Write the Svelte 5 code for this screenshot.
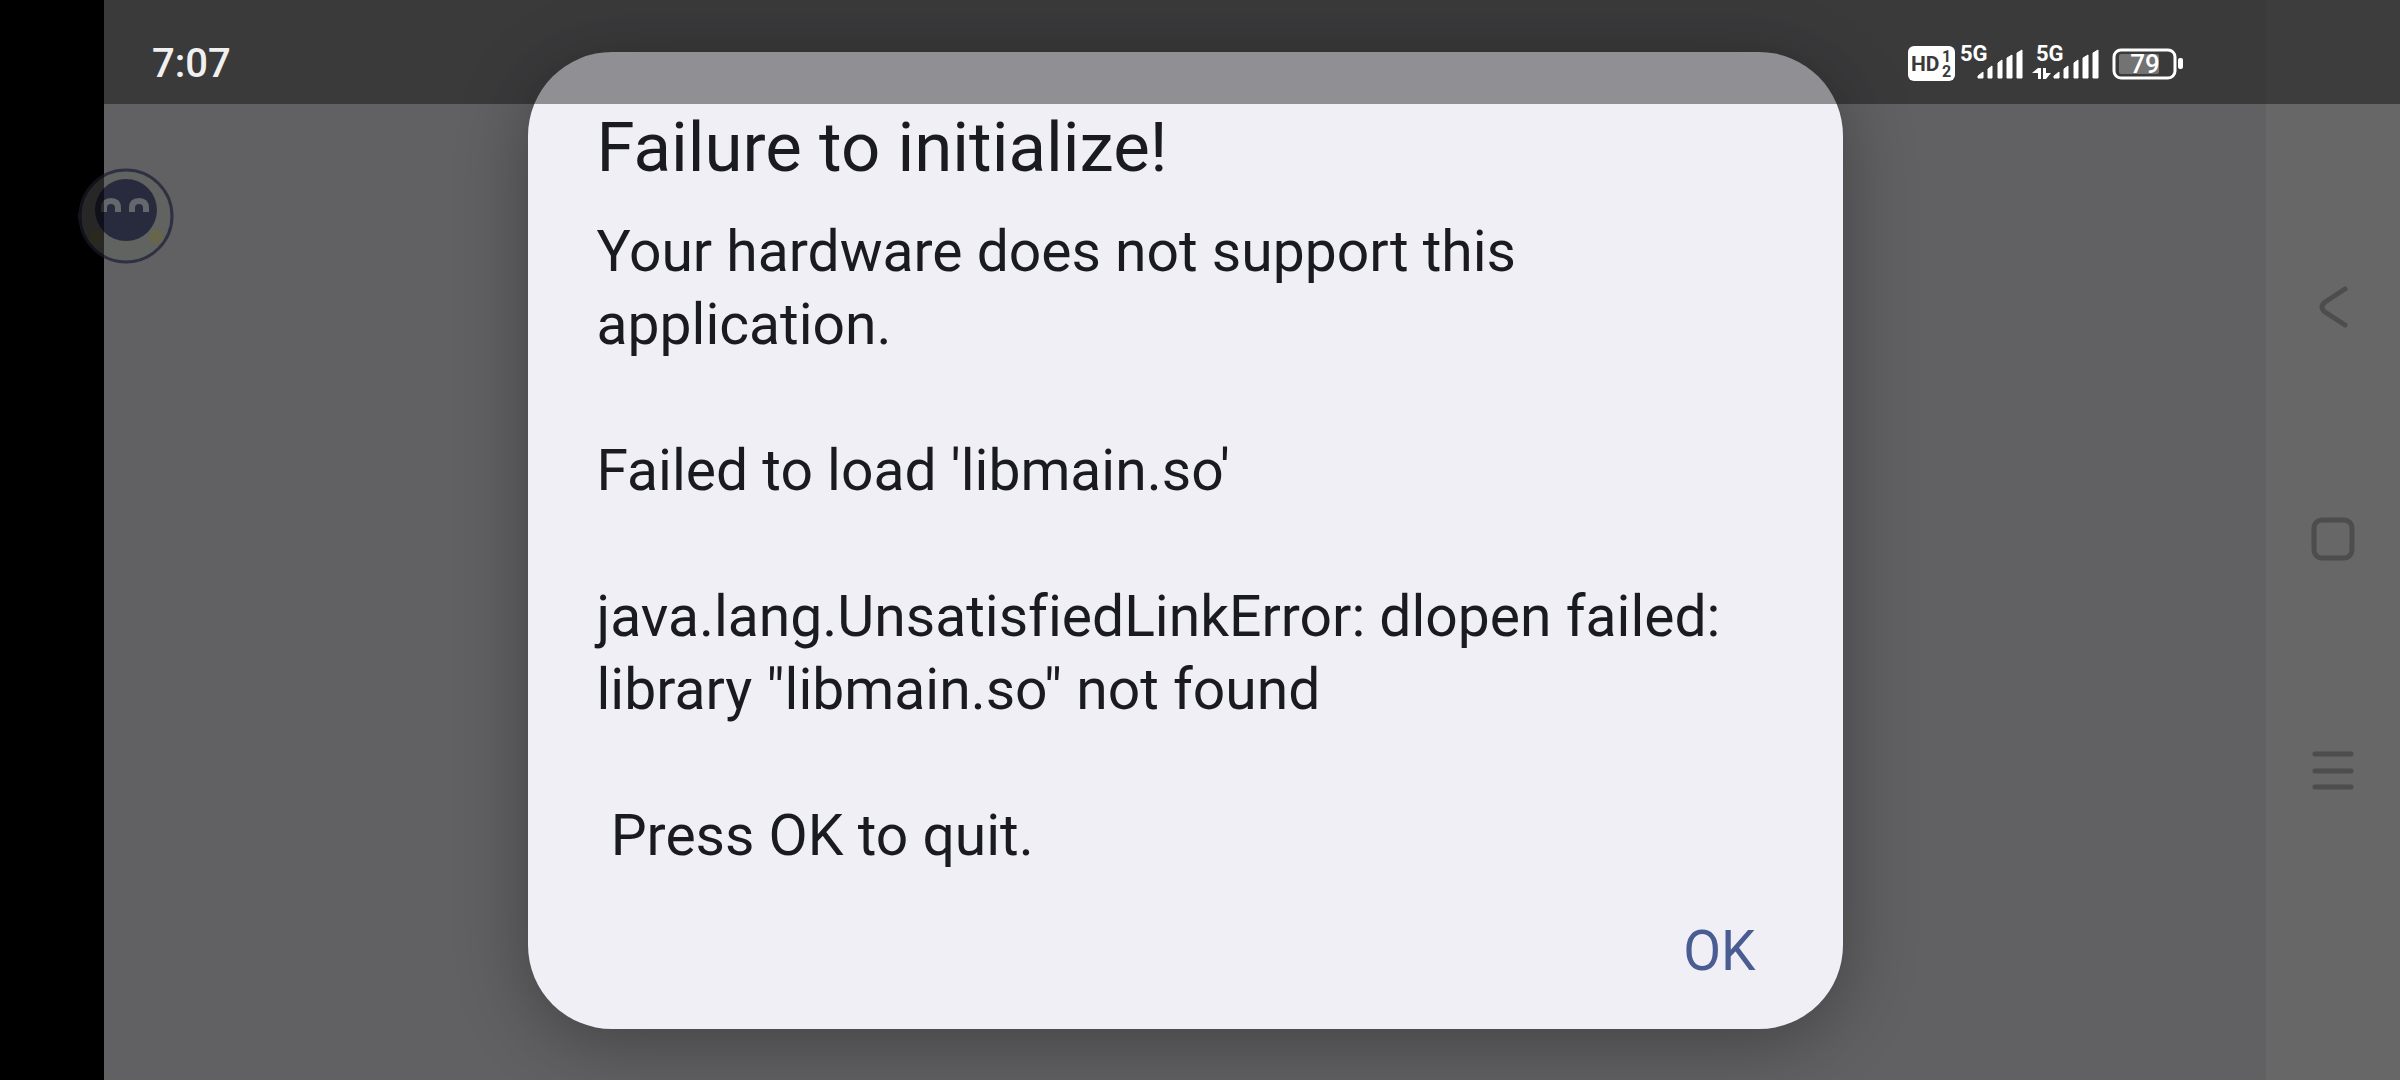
<script>
	let open = true;

	const title = 'Failure to initialize!';
	const message = `Your hardware does not support this application.

Failed to load 'libmain.so'

java.lang.UnsatisfiedLinkError: dlopen failed: library "libmain.so" not found

 Press OK to quit.`;

	const battery = 79;

	function close() {
		open = false;
	}
</script>

<style>
	:global(body) {
		margin: 0;
		background: #616163;
	}

	.screen {
		position: relative;
		display: grid;
		grid-template-columns: 104px 1fr 134px;
		min-height: 100vh;
		overflow: hidden;
		font-family: Roboto, "Noto Sans", sans-serif;
		background: #616163;
	}

	.cutout {
		background: #000;
	}

	.stage {
		display: flex;
		justify-content: center;
		align-items: center;
	}

	.dialog {
		display: flex;
		flex-direction: column;
		box-sizing: border-box;
		width: 100%;
		max-width: 1315px;
		padding: 50px 69px 26px;
		border-radius: 84px;
		background: #f0eff6;
		color: #1a1b21;
		box-shadow: 0 12px 72px rgba(0, 0, 0, 0.32);
	}

	.dialog h1 {
		margin: 0;
		font-size: 69px;
		line-height: 92px;
		font-weight: 400;
	}

	.dialog p {
		margin: 21px 0 27px;
		font-size: 57px;
		line-height: 73px;
		font-variant-ligatures: none;
		white-space: pre-wrap;
	}

	.dialog button {
		align-self: flex-end;
		padding: 20px 18px;
		border: none;
		background: none;
		color: #495d92;
		font: inherit;
		font-size: 55px;
		line-height: 64px;
		cursor: pointer;
	}

	.nav {
		display: flex;
		flex-direction: column;
		align-items: center;
		justify-content: center;
		gap: 168px;
		background: #676767;
	}

	.nav button {
		display: block;
		padding: 0;
		border: none;
		background: none;
		color: #4d4d4d;
		cursor: pointer;
	}

	svg {
		display: block;
		overflow: visible;
	}

	/* translucent, the dialog shows through */
	.status {
		position: absolute;
		top: 0;
		left: 104px;
		right: 0;
		height: 104px;
		box-sizing: border-box;
		display: flex;
		justify-content: space-between;
		align-items: center;
		padding: 24px 216px 0 48px;
		background: rgba(0, 0, 0, 0.4);
		color: #f0f0f0;
	}

	.status time {
		font-size: 40px;
		line-height: 48px;
		font-weight: 500;
	}

	.icons text {
		font-family: Roboto, sans-serif;
		font-weight: 700;
	}

	.icons .level {
		font-weight: 500;
	}

	.bubble {
		position: absolute;
		top: 168px;
		left: 79px;
	}
</style>

<div class="screen">
	<div class="cutout"></div>

	<main class="stage">
		{#if open}
			<div class="dialog" role="alertdialog" aria-labelledby="title" aria-describedby="message">
				<h1 id="title">{title}</h1>
				<p id="message">{message}</p>
				<button on:click={close}>OK</button>
			</div>
		{/if}
	</main>

	<nav class="nav">
		<button aria-label="Back">
			<svg width="64" height="64" viewBox="0 0 64 64" fill="none" stroke="currentColor" stroke-width="5" stroke-linecap="round" stroke-linejoin="round">
				<path d="M44 13 24 26Q18 31 24 36L44 49" />
			</svg>
		</button>
		<button aria-label="Home">
			<svg width="64" height="64" viewBox="0 0 64 64" fill="none" stroke="currentColor" stroke-width="5">
				<rect x="13" y="12" width="38" height="38" rx="8" />
			</svg>
		</button>
		<button aria-label="Recent apps">
			<svg width="64" height="64" viewBox="0 0 64 64" fill="none" stroke="currentColor" stroke-width="5" stroke-linecap="round">
				<path d="M14 14H50M14 31H50M14 47H50" />
			</svg>
		</button>
	</nav>

	<header class="status">
		<time>7:07</time>
		<svg class="icons" width="276" height="40" viewBox="0 0 276 40" fill="#fff">
			<rect x="0" y="2" width="47" height="35" rx="6" />
			<g fill="#3a3a3a">
				<text x="3" y="27" font-size="21">HD</text>
				<text x="34" y="18" font-size="16">1</text>
				<text x="34" y="33" font-size="16">2</text>
			</g>

			<text x="52" y="17" font-size="22">5G</text>
			<text x="128" y="17" font-size="22">5G</text>
			<g stroke="#fff" stroke-linejoin="round">
				<path d="M70 34V32L75 28V34ZM80 34V25L84 22V34ZM90 34V19L94 16V34ZM99 34V14L104 11V34ZM109 34V9L114 6V34Z" />
				<path d="M146 34V32L151 28V34ZM156 34V25L160 22V34ZM166 34V19L170 16V34ZM175 34V14L180 11V34ZM185 34V9L190 6V34Z" />
			</g>
			<path d="M124 29 130 24V29ZM130 24H133V35H130ZM135 24H138V35H135ZM138 29H143L138 35Z" />

			<rect x="206" y="6" width="61" height="28" rx="7" fill="none" stroke="#fff" stroke-width="3" />
			<rect x="211" y="10" width="40" height="20" rx="2" fill="#737373" />
			<rect x="270" y="14" width="5" height="11" rx="2" />
			<text class="level" x="237" y="29" font-size="26" text-anchor="middle">{battery}</text>
		</svg>
	</header>

	<svg class="bubble" width="96" height="96" viewBox="0 0 96 96">
		<circle cx="47" cy="48" r="46" fill="#616361" stroke="#2f3142" stroke-width="3" />
		<circle cx="47" cy="42" r="31" fill="#282b3d" />
		<g fill="none" stroke="#64686d" stroke-width="6">
			<path d="M25 44V40Q25 33 32 33T39 40V44" />
			<path d="M53 44V40Q53 33 60 33T67 40V44" />
		</g>
		<circle cx="17" cy="69" r="7" fill="#68664a" />
		<circle cx="77" cy="69" r="7" fill="#68664a" />
		<!-- part that hangs over the cutout -->
		<rect width="25" height="96" fill="#000" fill-opacity="0.6" />
	</svg>
</div>
